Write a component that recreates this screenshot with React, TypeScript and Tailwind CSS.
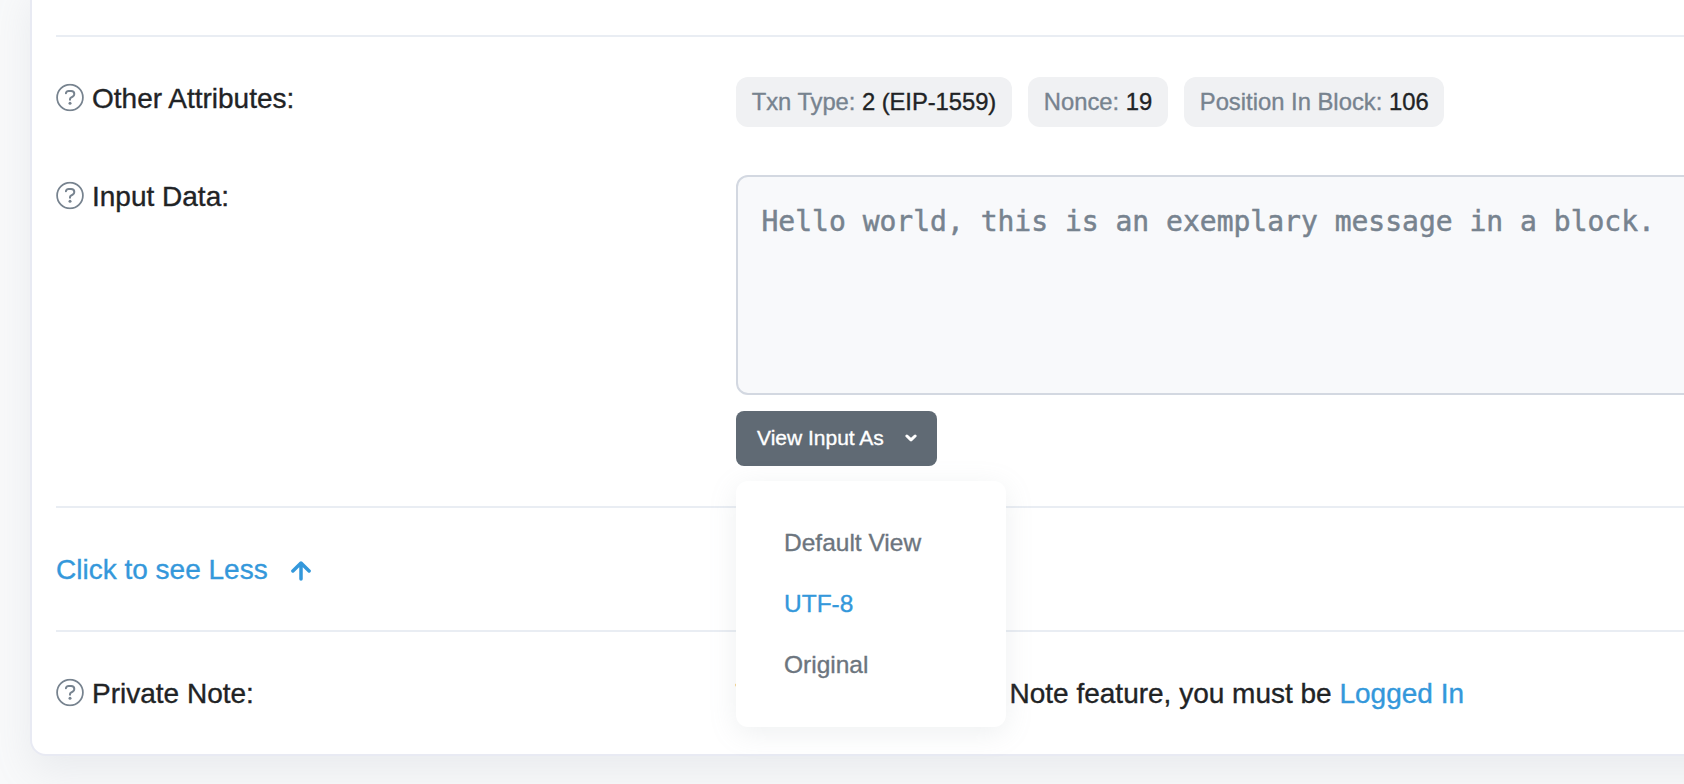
import type { ReactNode } from "react";

function HelpIcon() {
  return (
    <svg className="h-7 w-7 shrink-0 -translate-y-[0.6px] text-[#77838f]" viewBox="0 0 28 28" fill="none" stroke="currentColor" strokeLinecap="round" strokeLinejoin="round">
      <circle cx="14" cy="14" r="12.9" strokeWidth="1.75" />
      <path d="M9.9 9.9c.35-1.5 1.4-2.2 2.8-2.2h2.4c1.9 0 3.2 1.2 3.2 2.9 0 1.2-.6 2-1.6 2.6l-1.7 1c-.7.4-1 .9-1 1.6v.5" strokeWidth="2" />
      <circle cx="14" cy="19.9" r="1.5" fill="currentColor" stroke="none" />
    </svg>
  );
}

function ArrowUp() {
  return (
    <svg className="mt-[3px] h-5 w-5" viewBox="0 0 20 20" fill="none" stroke="currentColor" strokeWidth="3.5" strokeLinecap="round" strokeLinejoin="round">
      <path d="M10 18.1V2.2M1.9 10 10 2.1l8.1 7.9" />
    </svg>
  );
}

function ChevronDown() {
  return (
    <svg className="mt-px h-2 w-3" viewBox="0 0 12 8" fill="none" stroke="currentColor" strokeWidth="3" strokeLinecap="round" strokeLinejoin="round">
      <path d="M1.9 2 6 5.9 10.1 2" />
    </svg>
  );
}

function Label({ children }: { children: ReactNode }) {
  return (
    <div className="flex h-8 w-[680px] shrink-0 items-center">
      <HelpIcon />
      <span className="ml-2 translate-y-px">{children}</span>
    </div>
  );
}

function Badge({ name, value }: { name: string; value: string }) {
  return (
    <span className="flex h-[50px] items-center rounded-xl bg-[#f0f1f3] px-[15.75px] text-[23.8px] whitespace-pre text-[#77838f]">
      <span>
        {name}: <span className="text-[#212325]">{value}</span>
      </span>
    </span>
  );
}

const views = ["Default View", "UTF-8", "Original"];

export default function App() {
  return (
    <div className="h-[784px] w-[1684px] overflow-hidden bg-[#f8f9fa] pl-[30px] font-['Liberation_Sans',Arial,sans-serif] text-[28px] leading-8 text-[#212325] [-webkit-text-stroke:0.35px]">
      <main className="-mt-5 h-[776px] w-[1760px] rounded-2xl border-2 border-[#e8eaf3] bg-white pt-[53px] pl-6 shadow-[0_16px_38px_rgba(150,156,172,0.14)]">
        <hr className="border-t-2 border-[#e9edf3]" />

        <section className="flex pt-10">
          <div className="pt-[5px]">
            <Label>Other Attributes:</Label>
          </div>
          <div className="flex">
            <div className="w-[292px]">
              <div className="w-[276px] tracking-[-0.05px]">
                <Badge name="Txn Type" value="2 (EIP-1559)" />
              </div>
            </div>
            <div className="flex gap-4">
              <Badge name="Nonce" value="19" />
              <Badge name="Position In Block" value="106" />
            </div>
          </div>
        </section>

        <section className="flex pt-12">
          <div className="pt-[5px]">
            <Label>Input Data:</Label>
          </div>
          <div className="w-[1010px]">
            <div className="h-[220px] rounded-xl border-2 border-[#d3d8e1] bg-[#f8f9fb] pt-[27px] pl-[23.5px] font-['DejaVu_Sans_Mono',monospace] text-[28px] leading-9 whitespace-nowrap text-[#77838f] [-webkit-text-stroke:0.5px]">
              Hello world, this is an exemplary message in a block.
            </div>
            <div className="relative mt-4 w-[201px]">
              <button className="flex h-[55px] w-full items-center justify-between rounded-lg bg-[#606a74] pr-5 pb-0.5 pl-[21px] text-[21px] text-white">
                View Input As
                <ChevronDown />
              </button>
              <ul className="absolute top-[70px] left-0 z-10 flex h-[246px] w-[270px] flex-col rounded-xl bg-white pt-[31px] pl-12 text-[24.5px] text-[#6c757e] shadow-[0_6px_28px_rgba(140,152,164,0.15)]">
                {views.map((view) => (
                  <li key={view} className={view === "UTF-8" ? "flex h-[61px] items-center text-[#3498db]" : "flex h-[61px] items-center"}>
                    {view}
                  </li>
                ))}
              </ul>
            </div>
          </div>
        </section>

        <hr className="mt-10 border-t-2 border-[#e9edf3]" />
        <a className="flex h-[122px] items-center gap-[23.5px] text-[#3498db]">
          <span className="translate-y-px">Click to see Less</span>
          <ArrowUp />
        </a>
        <hr className="border-t-2 border-[#e9edf3]" />

        <section className="flex h-[122px] items-center">
          <Label>Private Note:</Label>
          <p className="-ml-[0.4px] translate-y-px">
            To access the Private Note feature, you must be <a className="text-[#3498db]">Logged In</a>
          </p>
        </section>
      </main>
    </div>
  );
}
